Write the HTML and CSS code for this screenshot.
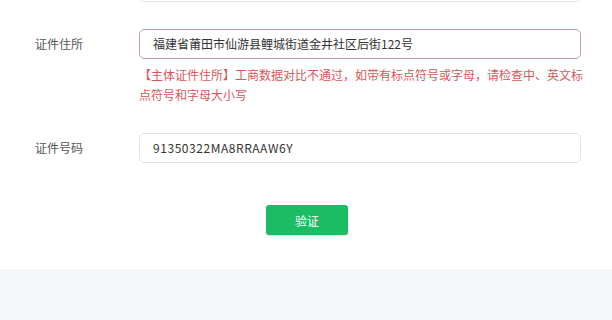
FILE: index.html
```html
<!DOCTYPE html>
<html lang="zh-CN">
<head>
<meta charset="utf-8">
<title>证件信息</title>
<link rel="stylesheet" href="styles.css">
</head>
<body>
<div class="page">
  <form class="form">
    <div class="row row-first">
      <div class="label"></div>
      <div class="field"><div class="input"></div></div>
    </div>
    <div class="row row-error">
      <div class="label">证件住所</div>
      <div class="field">
        <div class="input input-error">福建省莆田市仙游县鲤城街道金井社区后街122号</div>
        <div class="error-tip">【主体证件住所】工商数据对比不通过，如带有标点符号或字母，请检查中、英文标点符号和字母大小写</div>
      </div>
    </div>
    <div class="row">
      <div class="label">证件号码</div>
      <div class="field"><div class="input input-code">91350322MA8RRAAW6Y</div></div>
    </div>
    <div class="actions">
      <button type="button" class="btn">验证</button>
    </div>
  </form>
  <div class="footer"></div>
</div>
</body>
</html>
```

FILE: styles.css
```css
html, body {
  margin: 0;
  padding: 0;
  background: #ffffff;
}
body {
  font-family: "Noto Sans CJK SC", "Noto Sans", sans-serif;
  font-size: 12px;
  color: #333;
  width: 612px;
  height: 320px;
  overflow: hidden;
}
.page {
  display: flex;
  flex-direction: column;
  height: 320px;
}
.form {
  display: flex;
  flex-direction: column;
  padding-left: 35px;
  margin-top: -28px;
}
.row {
  display: flex;
  align-items: flex-start;
}
.row-first {
  margin-bottom: 27px;
}
.row-error {
  margin-bottom: 28px;
}
.label {
  width: 104px;
  flex: none;
  height: 30px;
  line-height: 30px;
  color: #555;
  font-size: 12px;
}
.field {
  width: 442px;
  flex: none;
}
.input {
  box-sizing: border-box;
  height: 30px;
  line-height: 28px;
  border: 1px solid #e3e3e3;
  border-radius: 5px;
  padding: 0 13px;
  color: #333;
  font-size: 12px;
  white-space: nowrap;
}
.input-error {
  border-color: #c5a0a0;
}
.input-code {
  letter-spacing: 0.55px;
}
.error-tip {
  margin-top: 6px;
  margin-right: -6px;
  color: #d6585a;
  font-size: 12px;
  line-height: 20px;
}
.actions {
  display: flex;
  justify-content: center;
  margin-top: 42px;
  padding-right: 33px;
}
.btn {
  width: 82px;
  height: 30px;
  border: none;
  border-radius: 3px;
  background: #1bbd64;
  color: #fff;
  font-family: "Noto Sans CJK SC", sans-serif;
  font-size: 12px;
  padding: 0;
  box-shadow: 0 1px 2px rgba(0,0,0,0.15);
}
.footer {
  margin-top: 34px;
  flex: 1;
  background: #f5f6f8;
}
```
